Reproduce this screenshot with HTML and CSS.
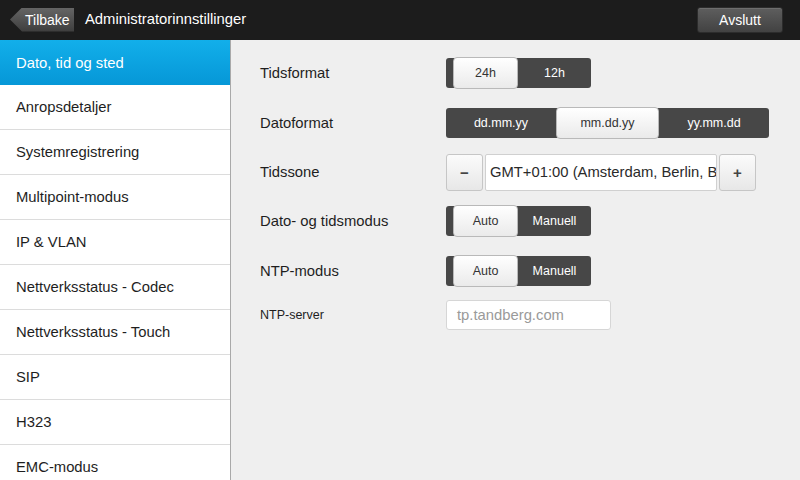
FILE: index.html
```html
<!DOCTYPE html>
<html lang="no">
<head>
<meta charset="utf-8">
<title>Administratorinnstillinger</title>
<link rel="stylesheet" href="styles.css">
</head>
<body>
<div class="app">
  <header class="topbar">
    <div class="back"><span>Tilbake</span></div>
    <div class="title">Administratorinnstillinger</div>
    <div class="spacer"></div>
    <div class="exit">Avslutt</div>
  </header>
  <div class="main">
    <nav class="sidebar">
      <div class="item selected">Dato, tid og sted</div>
      <div class="item">Anropsdetaljer</div>
      <div class="item">Systemregistrering</div>
      <div class="item">Multipoint-modus</div>
      <div class="item">IP &amp; VLAN</div>
      <div class="item">Nettverksstatus - Codec</div>
      <div class="item">Nettverksstatus - Touch</div>
      <div class="item">SIP</div>
      <div class="item">H323</div>
      <div class="item">EMC-modus</div>
    </nav>
    <section class="content">
      <div class="row r50">
        <div class="label">Tidsformat</div>
        <div class="seg toggle">
          <div class="opt on w65">24h</div>
          <div class="opt w73">12h</div>
        </div>
      </div>
      <div class="row r50">
        <div class="label">Datoformat</div>
        <div class="seg">
          <div class="opt w110">dd.mm.yy</div>
          <div class="opt on w103">mm.dd.yy</div>
          <div class="opt w110">yy.mm.dd</div>
        </div>
      </div>
      <div class="row r48">
        <div class="label">Tidssone</div>
        <div class="tz">
          <div class="btn">&minus;</div>
          <div class="tzfield"><span class="tztext">GMT+01:00 (Amsterdam, Berlin, Bern, Rome, Stockholm, Vienna)</span></div>
          <div class="btn">+</div>
        </div>
      </div>
      <div class="row r50">
        <div class="label">Dato- og tidsmodus</div>
        <div class="seg toggle">
          <div class="opt on w65">Auto</div>
          <div class="opt w73">Manuell</div>
        </div>
      </div>
      <div class="row r50">
        <div class="label">NTP-modus</div>
        <div class="seg toggle">
          <div class="opt on w65">Auto</div>
          <div class="opt w73">Manuell</div>
        </div>
      </div>
      <div class="row r38">
        <div class="label small">NTP-server</div>
        <div class="field">tp.tandberg.com</div>
      </div>
    </section>
  </div>
</div>
</body>
</html>
```

FILE: styles.css
```css
* { box-sizing: border-box; }
html, body { margin: 0; padding: 0; }
body {
  width: 800px;
  height: 480px;
  overflow: hidden;
  font-family: "Liberation Sans", Arial, sans-serif;
  background: #efefef;
}
.app { display: flex; flex-direction: column; height: 480px; }

.topbar {
  height: 40px;
  flex: 0 0 40px;
  background: #1c1c1c;
  display: flex;
  align-items: center;
  padding: 0 17px 0 10px;
}
.back {
  width: 64px;
  height: 24px;
  background: linear-gradient(#656565, #3d3d3d);
  clip-path: polygon(0 50%, 12px 0, 100% 0, 100% 100%, 12px 100%);
  display: flex;
  align-items: center;
  padding-left: 15px;
  color: #fff;
  font-size: 14px;
  margin-top: -1px;
}
.title {
  color: #fff;
  font-size: 14.8px;
  margin-left: 11px;
  margin-top: -2px;
}
.spacer { flex: 1; }
.exit {
  width: 86px;
  height: 26px;
  border: 1px solid #2c2c2c;
  border-radius: 3px;
  background: linear-gradient(#5e5e5e, #424242);
  box-shadow: inset 0 1px 0 #6e6e6e;
  color: #fff;
  font-size: 14px;
  display: flex;
  align-items: center;
  justify-content: center;
}

.main { flex: 1; display: flex; min-height: 0; }
.sidebar {
  width: 231px;
  flex: 0 0 231px;
  background: #fff;
  border-right: 1px solid #a9a9a9;
  overflow: hidden;
}
.item {
  height: 45px;
  border-bottom: 1px solid #dcdcdc;
  display: flex;
  align-items: center;
  padding-left: 16px;
  font-size: 14.8px;
  color: #1e1e1e;
}
.item.selected {
  background: linear-gradient(#12afea, #0697d7);
  color: #fff;
  border-bottom: 0;
}

.content {
  flex: 1;
  padding: 8px 0 0 29px;
}
.row { display: flex; align-items: center; }
.r50 { height: 50px; }
.r48 { height: 48px; }
.r38 { height: 38px; }
.label {
  width: 186px;
  flex: 0 0 186px;
  font-size: 14.8px;
  color: #1e1e1e;
}
.label.small { font-size: 12.5px; }

.seg {
  display: flex;
  height: 30px;
  background: #474747;
  border-radius: 3px;
}
.seg.toggle { padding-left: 7px; }
.opt {
  display: flex;
  align-items: center;
  justify-content: center;
  color: #fff;
  font-size: 12.5px;
}
.opt.on {
  margin: -1px 0;
  background: linear-gradient(#ffffff, #eaeaea);
  border: 1px solid #b9b9b9;
  border-radius: 4px;
  color: #333;
}
.w65 { width: 65px; }
.w73 { width: 73px; }
.w103 { width: 103px; }
.w110 { width: 110px; }

.tz { display: flex; gap: 2px; height: 37px; }
.btn {
  width: 37px;
  border: 1px solid #c6c6c6;
  border-radius: 3px;
  background: linear-gradient(#fbfbfb, #e7e7e7);
  display: flex;
  align-items: center;
  justify-content: center;
  font-size: 15px;
  font-weight: bold;
  color: #444;
}
.tzfield {
  width: 232px;
  background: #fff;
  border: 1px solid #d0d0d0;
  border-radius: 2px;
  display: flex;
  align-items: center;
  padding-left: 4px;
  overflow: hidden;
  font-size: 14.8px;
  color: #2a2a2a;
}
.tztext {
  display: block;
  width: 100%;
  overflow: hidden;
  white-space: nowrap;
}
.field {
  width: 165px;
  height: 30px;
  background: #fff;
  border: 1px solid #d6d6d6;
  border-radius: 3px;
  display: flex;
  align-items: center;
  padding-left: 10px;
  font-size: 14.8px;
  color: #9a9a9a;
}
```
